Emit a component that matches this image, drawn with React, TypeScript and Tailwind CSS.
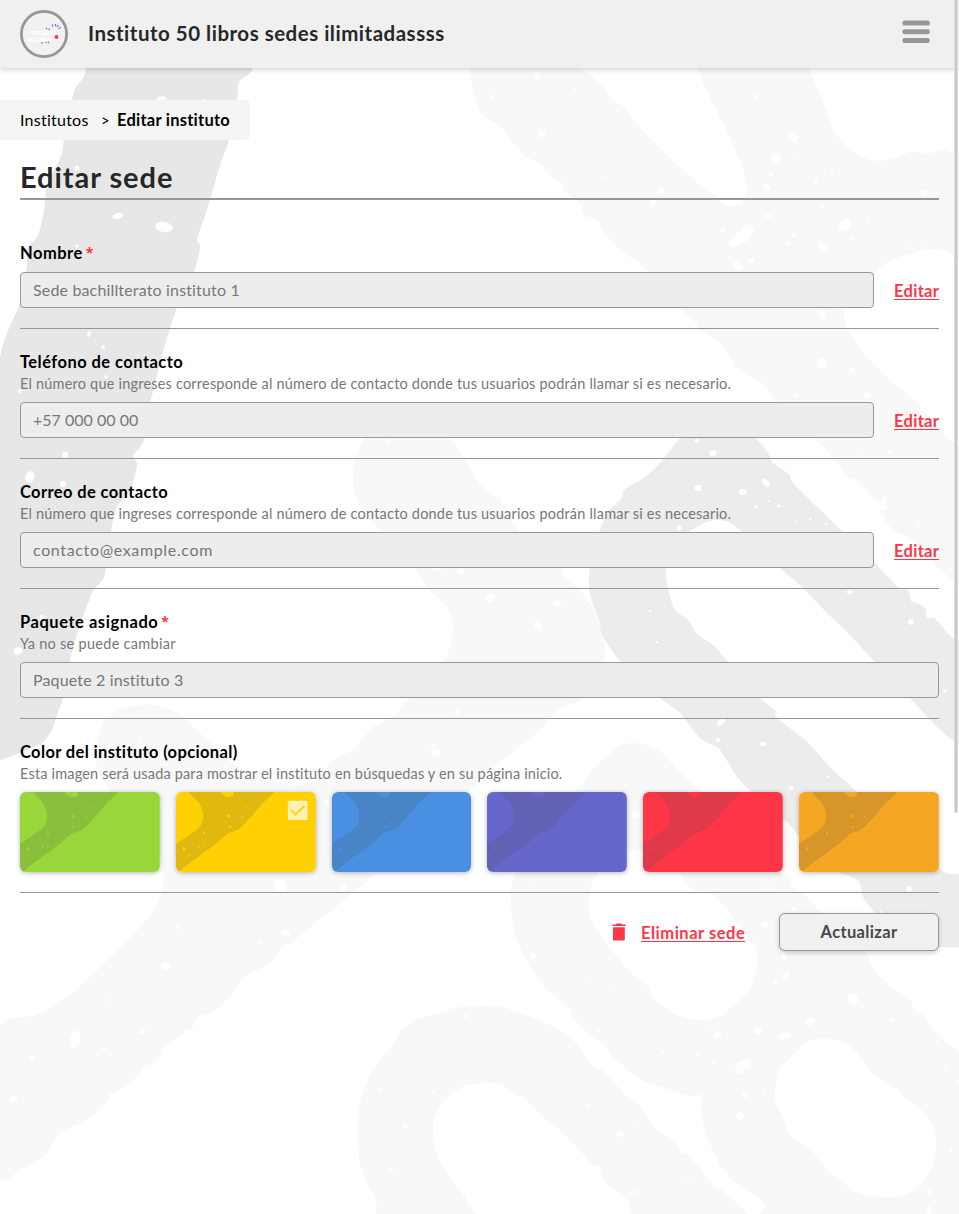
import type { ReactNode } from "react";

type Pt = [number, number];

// Closed curve through the given points.
const smooth = (p: Pt[]): string => {
  const n = p.length;
  const k = 7;
  let d = `M${p[0][0]} ${p[0][1]}`;
  for (let i = 0; i < n; i++) {
    const a = p[(i - 1 + n) % n];
    const b = p[i];
    const c = p[(i + 1) % n];
    const e = p[(i + 2) % n];
    d += `C${b[0] + (c[0] - a[0]) / k} ${b[1] + (c[1] - a[1]) / k} ${c[0] - (e[0] - b[0]) / k} ${c[1] - (e[1] - b[1]) / k} ${c[0]} ${c[1]}`;
  }
  return d + "Z";
};

const darkStroke: Pt[] = [[87,50],[87,62],[84,76],[75,89],[72,100],[64,140],[62,153],[57,165],[47,185],[44,210],[38,235],[26,250],[27,264],[20,303],[0,357],[-20,500],[-20,764],[0,760],[22,752],[42,743],[52,730],[57,715],[63,697],[70,660],[80,625],[92,593],[97,586],[104,577],[107,560],[113,520],[118,505],[130,490],[137,465],[133,456],[144,440],[151,400],[165,345],[178,305],[194,272],[200,247],[197,241],[200,230],[207,210],[220,165],[229,140],[237,100],[239,82],[250,73],[253,65],[253,50]];
const topRight: Pt[] = [[470,50],[470,68],[471,80],[480,111],[489,120],[503,128],[513,143],[525,156],[540,164],[552,178],[562,183],[565,192],[581,205],[583,214],[598,221],[605,233],[620,250],[645,268],[680,308],[697,324],[698,329],[720,343],[733,360],[735,367],[762,383],[778,402],[815,438],[842,468],[845,476],[858,481],[872,498],[880,502],[885,496],[886,509],[880,511],[893,530],[912,539],[930,558],[945,574],[980,590],[980,460],[959,447],[940,430],[914,400],[885,375],[860,348],[846,325],[845,305],[860,290],[875,275],[882,266],[900,257],[928,249],[945,251],[959,259],[980,260],[980,160],[953,153],[943,150],[927,154],[912,152],[895,158],[877,161],[862,157],[847,147],[835,132],[828,115],[818,90],[808,66],[802,50],[692,50],[698,68],[704,85],[718,113],[740,160],[747,187],[744,200],[730,206],[713,195],[700,185],[680,167],[647,135],[628,112],[625,107],[613,100],[604,87],[590,75],[580,68],[560,50]];
const leftBand: Pt[] = [[385,425],[365,438],[354,465],[354,490],[362,510],[380,530],[415,568],[430,590],[448,608],[453,630],[447,655],[430,680],[410,698],[395,715],[372,728],[355,748],[332,761],[315,780],[290,785],[265,778],[240,768],[225,757],[197,730],[180,714],[160,706],[140,705],[115,712],[102,726],[95,752],[100,775],[120,805],[152,840],[163,870],[161,895],[150,915],[128,940],[97,970],[65,999],[35,1015],[0,1026],[-20,1100],[0,1178],[20,1170],[47,1153],[60,1133],[85,1121],[106,1103],[110,1094],[118,1091],[138,1076],[143,1066],[152,1064],[161,1055],[163,1047],[183,1034],[185,1028],[191,1030],[198,1016],[210,1013],[230,997],[243,978],[272,962],[280,949],[290,943],[305,932],[325,915],[345,900],[372,876],[400,850],[440,825],[470,790],[490,770],[515,750],[540,730],[558,710],[580,700],[600,685],[605,650],[600,622],[580,590],[563,575],[560,567],[520,532],[500,498],[493,495],[480,484],[462,455],[445,435],[425,425]];
const midLoop: Pt[] = [[700,420],[680,438],[660,463],[645,477],[624,490],[622,498],[608,512],[598,535],[590,565],[590,595],[600,622],[602,635],[622,663],[660,698],[680,713],[700,738],[720,750],[737,777],[752,792],[785,820],[798,835],[823,865],[857,880],[863,897],[875,913],[893,938],[903,946],[915,947],[970,947],[1000,947],[1000,872],[970,872],[944,872],[910,840],[857,792],[830,767],[805,740],[777,718],[775,710],[760,698],[728,662],[713,645],[698,635],[688,620],[677,612],[672,603],[667,583],[666,560],[680,538],[695,528],[713,520],[728,522],[742,532],[780,568],[802,587],[827,613],[848,633],[875,662],[910,698],[937,727],[959,745],[980,760],[980,655],[953,638],[935,619],[927,618],[925,608],[917,603],[911,601],[908,590],[898,587],[875,563],[843,532],[795,485],[790,475],[773,463],[768,453],[757,440],[735,425]];
const lowerLoop: Pt[] = [[612,753],[618,746],[632,743],[647,745],[660,751],[667,758],[693,785],[740,830],[782,873],[790,878],[792,886],[808,897],[813,903],[840,930],[864,950],[875,972],[895,990],[911,1001],[913,1009],[925,1017],[940,1037],[959,1052],[985,1070],[985,1230],[768,1230],[765,1206],[750,1192],[735,1182],[720,1165],[707,1136],[701,1112],[701,1095],[690,1096],[675,1091],[643,1081],[625,1067],[612,1057],[604,1045],[590,1035],[572,1017],[570,1010],[545,987],[530,967],[515,935],[511,905],[513,880],[530,845],[560,805],[580,787],[593,768]];
const lowerHoleA: Pt[] = [[610,857],[595,877],[589,897],[590,917],[598,932],[628,970],[645,983],[658,1003],[680,1016],[701,1020],[720,1016],[735,1004],[750,990],[756,970],[757,950],[750,938],[727,910],[713,895],[693,890],[680,873],[665,856],[640,850]];
const lowerHoleB: Pt[] = [[825,1038],[845,1043],[858,1054],[870,1070],[882,1080],[897,1089],[905,1099],[920,1109],[932,1125],[936,1145],[930,1172],[915,1190],[895,1197],[870,1196],[852,1190],[843,1182],[825,1168],[813,1152],[800,1142],[788,1132],[782,1115],[775,1099],[777,1078],[783,1065],[800,1048],[812,1040]];
const arch: Pt[] = [[358,1120],[361,1098],[373,1070],[391,1047],[400,1032],[416,1020],[435,1014],[455,1008],[477,1006],[501,1007],[526,1015],[556,1028],[575,1042],[584,1055],[597,1069],[602,1070],[618,1087],[627,1098],[637,1103],[655,1127],[673,1140],[682,1153],[687,1154],[703,1172],[715,1187],[725,1193],[755,1230],[645,1230],[627,1200],[605,1182],[599,1167],[591,1164],[581,1152],[563,1133],[544,1118],[526,1100],[501,1085],[489,1083],[465,1086],[448,1097],[434,1118],[434,1142],[440,1162],[450,1178],[468,1202],[478,1230],[385,1230],[376,1198],[367,1183],[360,1163],[358,1140]];

// x, y, rx, ry, rotation
const specks: number[][] = [
  [537,76,3.5,3.5,0],[575,90,1.5,1.5,0],[491,97,2,2.5,0],[542,134,3.5,3.5,0],[756,97,3,2.5,0],[793,137,5,5,0],[776,158,4,4.5,0],[794,154,1.5,1,0],[771,174,2.5,2.2,0],[767,187,4,3,30],[661,191,3,3,0],[653,202,3,2.5,0],[605,177,1.5,1.5,0],[607,210,1,1,0],[816,182,2,1.7,-30],[832,173,1.5,2,20],[923,193,4,2.8,20],[822,207,2,1.5,0],[768,216,3,2.2,0],[723,230,3,2,0],[742,237,12,6,-35],[735,242,6.5,5,0],[748,230,7,5.5,-15],[845,225,7.5,4.5,-40],[794,235,2.5,2,30],[788,243,2.5,2,-30],[823,247,5,4,20],[816,232,2.5,1,0],[851,239,2.5,1.5,-20],[868,221,2,1,0],[738,266,4,5.5,-25],[751,261,4,2.3,0],[909,241,1.2,1.2,0],[927,241,1.2,1.2,0],[804,313,1,1,0],[823,315,4,4,0],[822,363,5,5,0],[852,370,3,2.5,50],[796,395,2.5,2,30],[867,395,3,3,0],
  [162,99,5,2.5,0],[204,100,1.5,1.5,0],[118,216,5.5,3,-15],[164,227,9,5,10],[77,168,2.5,2.5,0],[77,246,1.8,1.8,0],[89,334,1.7,3,10],[103,347,2,2,0],[106,377,1.5,2,0],[20,391,2,2,0],[65,455,3,3.5,0],[30,477,4.5,6,20],[63,484,3,3,0],[42,618,2.5,3,0],[18,651,4.5,3.5,-15],[122,365,3,2,0],
  [389,441,2,1.5,0],[461,571,3,3,0],[437,569,4,2,0],[490,598,4.5,4,-30],[557,603,4,3.5,0],[538,625,4,4.5,0],[457,712,2.5,3,20],[433,745,2,1.5,0],[436,753,4,4,20],[140,738,1.5,1,0],[163,764,3,2,0],[327,803,3,3.5,0],[171,812,1,2.5,0],[328,857,1.5,1,0],[280,886,6,7,-35],[343,888,4,3,-30],[178,927,3,2,0],[286,933,5,3.5,0],[261,942,2,2,0],[166,966,5.5,4,0],[142,983,1,1,0],[107,1000,2,1.5,0],[75,1039,5,9,15],[142,1031,3.5,3,0],[104,1049,2,2,0],[32,1058,3,2.8,0],[14,1099,3.5,2.8,0],[489,901,3,3.5,0],
  [697,441,2.5,2,20],[713,453,3.5,3,-30],[698,488,3.5,3.2,0],[743,492,4,3,0],[766,483,3,5,-40],[756,507,1.3,1.3,0],[779,506,2,1.5,0],[769,501,1,1,0],[796,522,1,1,0],[810,519,1.2,1.2,0],[826,524,1.3,1.3,0],[679,528,2.5,2.7,0],[850,592,3,2.3,0],[911,622,2.8,2.8,0],[945,691,2,1.7,0],[650,611,1.2,1.2,0],[657,642,1.2,1.2,0],[721,722,5,2.5,-35],[718,740,2.5,2,0],[763,744,3,2.3,0],[791,788,2.3,2.3,0],[828,777,1.2,1,0],[909,889,3,2.8,0],[881,912,1.3,1.3,0],
  [636,815,4,3.5,0],[768,888,2.5,2.3,0],[531,887,1.3,1.2,0],[794,909,2.5,2.3,0],[765,925,3,3.5,0],[533,956,3.5,2.7,0],[568,941,1,1,0],[784,955,2.5,4,-20],[786,976,4,3,-20],[776,983,2.3,2.8,0],[853,999,5,5.5,-20],[810,1022,5,3.5,-20],[893,1020,1.8,1.5,0],[785,1036,6,3.5,-20],[758,1031,4,3.5,0],[718,1035,3.5,2.7,0],[598,1030,2.2,2,0],[712,1026,1.3,1.3,0],[663,1052,1.5,1.5,0],[698,1055,1.7,1.7,0],[714,1063,2.2,1.8,0],[743,1065,8,4.5,-15],[739,1070,3.5,4,0],[745,1095,3,3,0],[764,1091,1.8,1.8,0],[740,1116,4,3.7,30],[937,1042,1.8,1.5,0],[945,1067,1.8,1.5,0],[957,1082,2,2,0],[951,1150,1.8,2,0],[929,1192,2.5,2.5,0],[929,1210,2,4,0],[589,982,1.2,1.2,0],[611,991,1.5,1,0],
  [466,1016,1.5,2.7,0],[379,1089,2,1.7,0],[433,1093,2.3,1.8,0],[405,1126,2.5,2.5,0],[391,1169,2.2,1.6,0],[589,1105,2.2,2,0],[620,1134,3.5,3,0],[636,1121,1.3,1,0],[688,1177,1.8,1.5,0],[637,1192,2,2,0],
  [835,444,1,1,0],[857,450,1.5,1.2,0],[890,452,1.8,1.4,0],[919,523,1.8,1.4,0],[945,477,1,1,0],[856,465,1.2,.8,0],
];

const cardStroke: Pt[] = [[13,-2],[23,11],[27,22],[25,33],[15,42],[0,52],[-6,60],[-6,84],[4,79],[15,70],[23,64],[33,57],[42,50],[51,42],[63,37],[74,26],[80,19],[88,10],[98,-2],[62,-2],[57,4],[51,5],[46,2],[42,-2]];
const cardSpecks: number[][] = [[35,10,.8,.8],[53,24,1.6,1.6],[54,35,1.5,1],[66,25,1,1],[28,41,1.1,1.3],[8,57,1.3,2],[23,55,1,.8],[14,63,.8,.8],[28,54,1,.8],[70,15,1,.8]];

const Backdrop = () => (
  <svg className="absolute top-0 left-0 h-[1214px] w-[959px]" viewBox="0 0 959 1214" aria-hidden="true">
    <path fill="#e7e7e7" d={smooth(darkStroke)} />
    <path fill="#f8f8f8" d={smooth(topRight)} />
    <path fill="#f8f8f8" d={smooth(leftBand)} />
    <path fill="#f8f8f8" fillRule="evenodd" d={smooth(lowerLoop) + smooth(lowerHoleA) + smooth(lowerHoleB)} />
    <path fill="#f8f8f8" d={smooth(arch)} />
    <path fill="#ececec" d={smooth(midLoop)} />
    {specks.map(([x, y, rx, ry, r], i) => (
      <ellipse key={i} cx={x} cy={y} rx={rx} ry={ry} fill="#fff" transform={`rotate(${r} ${x} ${y})`} />
    ))}
  </svg>
);

const Logo = () => (
  <svg className="h-12 w-12" viewBox="0 0 48 48" aria-hidden="true">
    <circle cx="24" cy="24" r="22.6" fill="#f1f1f1" stroke="#979797" strokeWidth="2.8" />
    <g fill="#fff" fontFamily="Lato, sans-serif" fontWeight="900" fontSize="8">
      <text x="11" y="24.5" textLength="25" lengthAdjust="spacingAndGlyphs">make</text>
      <text x="7" y="31.5" textLength="26" lengthAdjust="spacingAndGlyphs">make</text>
    </g>
    <path
      stroke="#7474f4"
      strokeWidth="1.3"
      fill="none"
      d="M32.5 14.5v2.2M35.5 14v2.3M38.2 15l-1 2M40.6 17.2l-2 1.6M26.5 17.8v1.8M29.3 18.5v1.4M22 32v1.8M25.6 31.8l.8 1.2M28 31.6l.9 1.6"
    />
    <circle cx="36.5" cy="27" r="1.9" fill="#ff3648" />
  </svg>
);

const Label = ({ children, required, className }: { children: ReactNode; required?: boolean; className: string }) => (
  <div className="flex h-6 items-center pt-px text-[16.5px] leading-6 font-bold text-black">
    <span className={className}>{children}</span>
    {required && <span className="ml-[3px] font-['Open_Sans'] text-[14px] font-bold text-[#ff3648]">*</span>}
  </div>
);

const Hint = ({ children, className }: { children: ReactNode; className: string }) => (
  <p className={`h-[21px] text-[14.5px] leading-[21px] whitespace-nowrap text-[#777] ${className}`}>{children}</p>
);

const Field = ({ value, editable = true, className }: { value: string; editable?: boolean; className: string }) => (
  <div className="mt-2 flex items-center gap-5">
    <div className="flex h-9 flex-1 items-center rounded border border-[#979797] bg-[#ededed] px-3 text-[16px] text-[#777]">
      <span className={className}>{value}</span>
    </div>
    {editable && (
      <a className="mt-px w-[45px] border-b border-[#ff3648] pt-px text-[16.5px] leading-[16px] font-bold tracking-[0.3px] whitespace-nowrap text-[#ff3648]">
        Editar
      </a>
    )}
  </div>
);

const Card = ({ color, checked }: { color: string; checked?: boolean }) => (
  <div className="h-20 flex-1 overflow-hidden rounded-md shadow-[0_1px_5px_rgba(0,0,0,0.28)]">
    <svg className="h-20 w-full" viewBox="0 0 140 80" preserveAspectRatio="none" aria-hidden="true">
      <rect width="140" height="80" fill={color} />
      <path d={smooth(cardStroke)} fill="#4c4c4c" fillOpacity="0.18" />
      {cardSpecks.map((s, i) => (
        <ellipse key={i} cx={s[0]} cy={s[1]} rx={s[2]} ry={s[3]} fill={color} />
      ))}
      {checked && (
        <>
          <rect x="112" y="8.7" width="19.7" height="19.3" rx="1.5" fill="#fff" fillOpacity="0.7" />
          <path d="M115.2 18.2l4.3 4.4 9-8.6" fill="none" stroke={color} strokeWidth="1.8" />
        </>
      )}
    </svg>
  </div>
);

export default function App() {
  return (
    <div className="relative h-[1214px] w-full overflow-hidden bg-white font-['Lato',sans-serif] [font-variant-ligatures:none]">
      <Backdrop />
      <div className="relative">
        <header className="flex h-[68px] items-center bg-[#f0f0f0] pr-[29px] pl-5 shadow-[0_2px_5px_rgba(0,0,0,0.16)]">
          <Logo />
          <h1 className="mb-[2px] ml-5 flex-1 text-[20.5px] leading-7 font-bold tracking-[0.5px] whitespace-nowrap text-[#272727]">
            Instituto 50 libros sedes ilimitadassss
          </h1>
          <svg className="mb-1 h-6 w-7" viewBox="0 0 28 24" aria-hidden="true">
            <g fill="#979797">
              <rect x="0.4" y="0.6" width="27.4" height="5" rx="2.2" />
              <rect x="0.4" y="9.3" width="27.4" height="5" rx="2.2" />
              <rect x="0.4" y="18" width="27.4" height="5" rx="2.2" />
            </g>
          </svg>
        </header>

        <nav className="mt-8 flex h-10 w-[250px] items-center rounded-r-[5px] bg-[#f5f5f5] pl-5 text-black">
          <span className="w-[81px] text-[16px] tracking-[0.24px]">Institutos</span>
          <span className="w-4 text-[15px]">&gt;</span>
          <span className="text-[16.5px] font-bold tracking-[0.24px] whitespace-nowrap">Editar instituto</span>
        </nav>

        <main className="px-5">
          <h2 className="mt-5 h-10 border-b-2 border-[#979797] text-[29px] leading-[34px] font-bold tracking-[0.95px] text-[#272727]">
            Editar sede
          </h2>

          <section className="mt-10 border-b border-[#979797] pb-5">
            <Label required className="tracking-[0.5px]">Nombre</Label>
            <Field value="Sede bachillterato instituto 1" className="tracking-[0.16px]" />
          </section>

          <section className="border-b border-[#979797] pt-5 pb-5">
            <Label className="tracking-[0.45px]">Teléfono de contacto</Label>
            <Hint className="tracking-[0.2px]">
              El número que ingreses corresponde al número de contacto donde tus usuarios podrán llamar si es necesario.
            </Hint>
            <Field value="+57 000 00 00" className="tracking-[0.02px]" />
          </section>

          <section className="border-b border-[#979797] pt-5 pb-5">
            <Label className="tracking-[0.38px]">Correo de contacto</Label>
            <Hint className="tracking-[0.2px]">
              El número que ingreses corresponde al número de contacto donde tus usuarios podrán llamar si es necesario.
            </Hint>
            <Field value="contacto@example.com" className="tracking-[0.65px]" />
          </section>

          <section className="border-b border-[#979797] pt-5 pb-5">
            <Label required className="tracking-[0.54px]">Paquete asignado</Label>
            <Hint className="tracking-[0.28px]">Ya no se puede cambiar</Hint>
            <Field value="Paquete 2 instituto 3" editable={false} className="tracking-[0.15px]" />
          </section>

          <section className="border-b border-[#979797] pt-5 pb-5">
            <Label className="tracking-[0.36px]">Color del instituto (opcional)</Label>
            <Hint className="tracking-[0.17px]">
              Esta imagen será usada para mostrar el instituto en búsquedas y en su página inicio.
            </Hint>
            <div className="mt-2 flex gap-4">
              <Card color="#98d73a" />
              <Card color="#ffd103" checked />
              <Card color="#4990e2" />
              <Card color="#6766cb" />
              <Card color="#ff3648" />
              <Card color="#f5a623" />
            </div>
          </section>

          <div className="mt-5 flex items-center justify-end">
            <svg className="mr-[15px] h-[18px] w-[14px]" viewBox="0 0 14 18" aria-hidden="true">
              <path fill="#ff3648" d="M0.3 1.5h3.3L4.6 0.5h4.6l1 1h3.4v1.6H0.3zM1 4.2h11.8v12.4q0 .8-.8.8H1.8q-.8 0-.8-.8z" />
            </svg>
            <a className="mt-px w-[104px] border-b border-[#ff3648] pt-px text-[16.5px] leading-[16px] font-bold tracking-[0.52px] whitespace-nowrap text-[#ff3648]">
              Eliminar sede
            </a>
            <button className="ml-[34px] h-[38px] w-40 rounded-md border border-[#979797] bg-[#f0f0f0] text-[16.5px] font-bold tracking-[0.34px] text-[#484848] shadow-[0_2px_5px_rgba(0,0,0,0.2)]">
              Actualizar
            </button>
          </div>
        </main>
      </div>
      <div className="absolute top-0 right-[1px] h-[813px] w-[4px] rounded-b-sm border-x border-[#dedede] bg-[#c9c9c9]" />
    </div>
  );
}
